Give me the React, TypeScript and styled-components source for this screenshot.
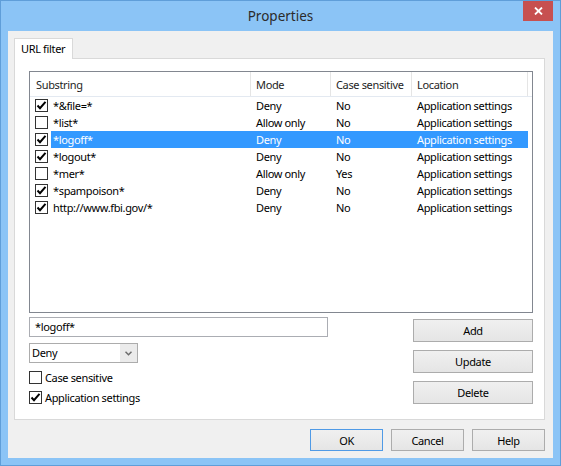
import styled, { createGlobalStyle } from "styled-components";

const GlobalStyle = createGlobalStyle`
  html, body {
    margin: 0;
    padding: 0;
  }
  body {
    font-family: "Noto Sans", "Segoe UI", sans-serif;
    font-size: 11px;
    letter-spacing: -0.35px;
    color: #000;
  }
  * {
    box-sizing: border-box;
  }
`;

interface FilterRule {
    substring: string;
    mode: string;
    caseSensitive: string;
    location: string;
    enabled: boolean;
}

const rules: FilterRule[] = [
    { substring: "*&file=*", mode: "Deny", caseSensitive: "No", location: "Application settings", enabled: true },
    { substring: "*list*", mode: "Allow only", caseSensitive: "No", location: "Application settings", enabled: false },
    { substring: "*logoff*", mode: "Deny", caseSensitive: "No", location: "Application settings", enabled: true },
    { substring: "*logout*", mode: "Deny", caseSensitive: "No", location: "Application settings", enabled: true },
    { substring: "*mer*", mode: "Allow only", caseSensitive: "Yes", location: "Application settings", enabled: false },
    { substring: "*spampoison*", mode: "Deny", caseSensitive: "No", location: "Application settings", enabled: true },
    { substring: "http://www.fbi.gov/*", mode: "Deny", caseSensitive: "No", location: "Application settings", enabled: true },
];

const SELECTED = 2;

const CheckBox = ({ checked }: { checked: boolean }) => (
    <Box>
        {checked && (
            <svg width="11" height="11" viewBox="0 0 11 11">
                <path d="M1.5 5.5 L4 8.2 L9.5 1.8" fill="none" stroke="#000" strokeWidth="2" />
            </svg>
        )}
    </Box>
);

const App = () => {
    return (
        <>
            <GlobalStyle />
            <Window>
                <TitleBar>
                    <span />
                    <Title>Properties</Title>
                    <CloseButton>
                        <svg width="9" height="8" viewBox="0 0 9 8">
                            <path d="M1 0.5 L8 7.5 M8 0.5 L1 7.5" stroke="#fff" strokeWidth="1.8" />
                        </svg>
                    </CloseButton>
                </TitleBar>
                <Client>
                    <TabStrip>
                        <Tab>URL filter</Tab>
                    </TabStrip>
                    <Panel>
                        <ListView>
                            <HeaderRow>
                                <HeaderCell $width={221} $pad={6}>Substring</HeaderCell>
                                <HeaderCell $width={80} $pad={5}>Mode</HeaderCell>
                                <HeaderCell $width={81} $pad={5}>Case sensitive</HeaderCell>
                                <HeaderCell $width={116} $pad={5}>Location</HeaderCell>
                            </HeaderRow>
                            {rules.map((rule, i) => (
                                <Row key={rule.substring}>
                                    <CheckCell>
                                        <CheckBox checked={rule.enabled} />
                                    </CheckCell>
                                    <RowBody $selected={i === SELECTED}>
                                        <Cell $width={200} $pad={2}>{rule.substring}</Cell>
                                        <Cell $width={80} $pad={5}>{rule.mode}</Cell>
                                        <Cell $width={81} $pad={5}>{rule.caseSensitive}</Cell>
                                        <Cell $width={116} $pad={5}>{rule.location}</Cell>
                                    </RowBody>
                                </Row>
                            ))}
                        </ListView>
                        <EditArea>
                            <LeftColumn>
                                <TextInput>*logoff*</TextInput>
                                <Combo>
                                    <ComboText>Deny</ComboText>
                                    <ComboArrow>
                                        <svg width="7" height="5" viewBox="0 0 7 5">
                                            <path d="M0.5 0.8 L3.5 3.8 L6.5 0.8" fill="none" stroke="#6d6d6d" strokeWidth="1.5" />
                                        </svg>
                                    </ComboArrow>
                                </Combo>
                                <CheckRow $first>
                                    <CheckBox checked={false} />
                                    <span>Case sensitive</span>
                                </CheckRow>
                                <CheckRow>
                                    <CheckBox checked />
                                    <span>Application settings</span>
                                </CheckRow>
                            </LeftColumn>
                            <RightColumn>
                                <SideButton>Add</SideButton>
                                <SideButton>Update</SideButton>
                                <SideButton>Delete</SideButton>
                            </RightColumn>
                        </EditArea>
                    </Panel>
                    <ButtonBar>
                        <DialogButton $default>OK</DialogButton>
                        <DialogButton>Cancel</DialogButton>
                        <DialogButton>Help</DialogButton>
                    </ButtonBar>
                </Client>
            </Window>
        </>
    );
};

export default App;

const Window = styled.div`
    width: 561px;
    height: 466px;
    display: flex;
    flex-direction: column;
    border: 1px solid #5f9ed9;
    background: #8bc4f6;
`;

const TitleBar = styled.div`
    height: 30px;
    display: grid;
    grid-template-columns: 1fr auto 1fr;
    padding: 0 7px;
`;

const Title = styled.div`
    align-self: center;
    font-size: 13.5px;
    letter-spacing: 0;
    color: #2b2b2b;
    padding-bottom: 1px;
`;

const CloseButton = styled.div`
    justify-self: end;
    width: 30px;
    height: 20px;
    display: flex;
    align-items: center;
    justify-content: center;
    background: #c75050;
`;

const Client = styled.div`
    flex: 1;
    margin: 0 7px 7px;
    padding: 7px 8px 7px 6px;
    display: flex;
    flex-direction: column;
    background: #f0f0f0;
`;

const TabStrip = styled.div`
    height: 20px;
    display: flex;
`;

const Tab = styled.div`
    position: relative;
    z-index: 1;
    width: 59px;
    height: 21px;
    padding-left: 6px;
    line-height: 19px;
    border: 1px solid #d9d9d9;
    border-bottom: none;
    background: #fff;
`;

const Panel = styled.div`
    height: 362px;
    padding: 12px 11px 0 14px;
    display: flex;
    flex-direction: column;
    border: 1px solid #d9d9d9;
    background: #fff;
`;

const ListView = styled.div`
    height: 242px;
    border: 1px solid #828790;
    background: #fff;
`;

const HeaderRow = styled.div`
    height: 25px;
    display: flex;
    border-bottom: 1px solid #e3e9f1;
`;

const HeaderCell = styled.div<{ $width: number; $pad: number }>`
    width: ${({ $width }) => $width}px;
    padding-left: ${({ $pad }) => $pad}px;
    display: flex;
    align-items: center;
    white-space: nowrap;
    border-right: 1px solid #e5e5e5;
    color: #1e1e1e;
`;

const Row = styled.div`
    height: 17px;
    display: flex;
`;

const CheckCell = styled.div`
    width: 21px;
    padding-left: 5px;
    display: flex;
    align-items: center;
`;

const RowBody = styled.div<{ $selected: boolean }>`
    width: 477px;
    display: flex;
    background: ${({ $selected }) => ($selected ? "#3399ff" : "transparent")};
    color: ${({ $selected }) => ($selected ? "#fff" : "#000")};
`;

const Cell = styled.div<{ $width: number; $pad: number }>`
    width: ${({ $width }) => $width}px;
    padding-left: ${({ $pad }) => $pad}px;
    line-height: 17px;
    white-space: nowrap;
    overflow: hidden;
`;

const Box = styled.span`
    width: 13px;
    height: 13px;
    flex: none;
    display: flex;
    align-items: center;
    justify-content: center;
    border: 1px solid #333;
    background: #fff;
`;

const EditArea = styled.div`
    margin-top: 4px;
    display: flex;
    justify-content: space-between;
`;

const LeftColumn = styled.div`
    width: 299px;
    display: flex;
    flex-direction: column;
`;

const TextInput = styled.div`
    height: 20px;
    padding-left: 5px;
    line-height: 18px;
    border: 1px solid #abadb3;
    background: #fff;
`;

const Combo = styled.div`
    width: 109px;
    height: 20px;
    margin-top: 6px;
    display: flex;
    border: 1px solid #acacac;
    background: #fff;
`;

const ComboText = styled.div`
    flex: 1;
    padding-left: 2px;
    line-height: 18px;
`;

const ComboArrow = styled.div`
    width: 17px;
    display: flex;
    align-items: center;
    justify-content: center;
    background: #ebebeb;
`;

const CheckRow = styled.div<{ $first?: boolean }>`
    height: 20px;
    margin-top: ${({ $first }) => ($first ? 4 : 0)}px;
    display: flex;
    align-items: center;
    gap: 3px;
`;

const RightColumn = styled.div`
    width: 120px;
    margin-top: 2px;
    display: flex;
    flex-direction: column;
    gap: 8px;
`;

const SideButton = styled.button`
    height: 23px;
    padding: 0;
    font: inherit;
    letter-spacing: inherit;
    color: #000;
    border: 1px solid #acacac;
    background: linear-gradient(#f0f0f0, #e5e5e5);
`;

const ButtonBar = styled.div`
    margin-top: 9px;
    display: flex;
    justify-content: flex-end;
    gap: 8px;
`;

const DialogButton = styled.button<{ $default?: boolean }>`
    width: 73px;
    height: 22px;
    padding: 0;
    font: inherit;
    letter-spacing: inherit;
    color: #000;
    border: 1px solid ${({ $default }) => ($default ? "#4f9ae6" : "#acacac")};
    background: linear-gradient(#f0f0f0, #e5e5e5);
`;
